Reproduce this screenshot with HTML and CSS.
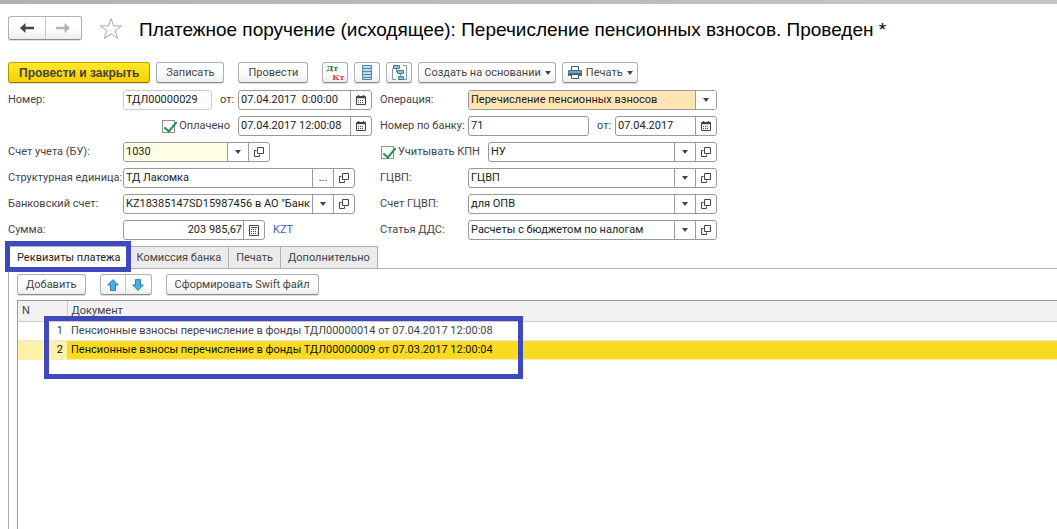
FILE: index.html
```html
<!DOCTYPE html>
<html lang="ru">
<head>
<meta charset="utf-8">
<title>Платежное поручение (исходящее)</title>
<link rel="stylesheet" href="styles.css">
</head>
<body>
<svg class="defs" aria-hidden="true">
  <symbol id="caret" viewBox="0 0 6 4"><path d="M0 0h6L3 4z" fill="#444"/></symbol>
  <symbol id="open" viewBox="0 0 10 10"><path d="M3.5.5h6v6h-6zM2.500 3.500h-2v6h5v-2" fill="none" stroke="#444"/></symbol>
  <symbol id="calendar" viewBox="0 0 10 10"><path d="M.5 1.500h9v8h-9z" fill="#fff" stroke="#444"/><path d="M1 2.500h8M2.500 0v2M7.500 0v2" stroke="#444" stroke-width="1.500"/><path d="M2 5.500h6M2 7.500h6" stroke="#444" stroke-dasharray="1 1"/></symbol>
  <symbol id="calc" viewBox="0 0 10 11"><path d="M.5.5h9v10h-9z" fill="#fff" stroke="#444"/><path d="M2 2.500h6" stroke="#444"/><path d="M2 4.500h6M2 6.500h6M2 8.500h6" stroke="#444" stroke-dasharray="1 1"/></symbol>
</svg>
<div class="titlebar-edge"></div>
<header class="head">
  <div class="pair nav">
    <button aria-label="Назад"><svg width="14" height="10" viewBox="0 0 14 10"><path d="M0 5l5.500-5v3.700H14v2.600H5.500V10z" fill="#444"/></svg></button>
    <button aria-label="Вперед"><svg width="14" height="10" viewBox="0 0 14 10"><path d="M14 5L8.500 0v3.700H0v2.600h8.500V10z" fill="#b4b4b4"/></svg></button>
  </div>
  <button class="star" aria-label="Избранное"><svg width="24" height="23" viewBox="0 0 24 23"><path d="M12 1.500l2.600 7.400h8l-6.400 4.800 2.400 7.800L12 16.900l-6.600 4.600 2.400-7.800-6.400-4.800h8z" fill="#fff" stroke="#aaa"/></svg></button>
  <h1>Платежное поручение (исходящее): Перечисление пенсионных взносов. Проведен *</h1>
</header>
<div class="toolbar main-tools">
  <button class="btn primary">Провести и закрыть</button>
  <button class="btn">Записать</button>
  <button class="btn spaced">Провести</button>
  <button class="btn icon spaced" aria-label="Дт Кт"><span class="dtkt"><b class="dt">Дт</b><b class="kt">Кт</b></span></button>
  <button class="btn icon" aria-label="Список"><svg width="10" height="15" viewBox="0 0 10 15"><path d="M.5.5h9v14h-9z" fill="#b9dbee" stroke="#5b86a0"/><path d="M1 3.500h8M1 6.500h8M1 9.500h8M1 12.500h8" stroke="#5b86a0"/></svg></button>
  <button class="btn icon" aria-label="Структура"><svg width="15" height="15" viewBox="0 0 15 15"><path d="M3 3.500H.5v11H4M11 .5h3.500v14H12M4.500 4v3h1M8.500 9v3" fill="none" stroke="#8199a8"/><path d="M1.500.5h6v3h-6zM5.500 5.500h6v3h-6zM6.500 11.500h5v3h-5z" fill="#8cc0de" stroke="#4c7893"/></svg></button>
  <button class="btn menu">Создать на основании <svg width="6" height="4"><use href="#caret"/></svg></button>
  <button class="btn menu print"><svg width="14" height="13" viewBox="0 0 14 13"><path d="M3.500.5h7v4h-7z" fill="#fff" stroke="#3c5a70"/><path d="M1 4h12a1 1 0 0 1 1 1v5H0V5a1 1 0 0 1 1-1z" fill="#3f6e90"/><path d="M1 6h12" stroke="#b5d3e5"/><path d="M3.500 8.500h7v4h-7z" fill="#fff" stroke="#3c5a70"/></svg>Печать <svg width="6" height="4"><use href="#caret"/></svg></button>
</div>

<form class="form">
  <div class="col left">
    <div class="row">
      <label class="cap" for="num">Номер:</label>
      <div class="field pale w-num"><input id="num" value="ТДЛ00000029"></div>
      <label class="from" for="d1">от:</label>
      <div class="field w-date"><input id="d1" value="07.04.2017  0:00:00"><button type="button" class="cell" aria-label="Календарь"><svg width="10" height="10"><use href="#calendar"/></svg></button></div>
    </div>
    <div class="row end">
      <label class="check"><input type="checkbox" checked>Оплачено</label>
      <div class="field w-date"><input aria-label="Дата оплаты" value="07.04.2017 12:00:08"><button type="button" class="cell" aria-label="Календарь"><svg width="10" height="10"><use href="#calendar"/></svg></button></div>
    </div>
    <div class="row">
      <label class="cap" for="acc">Счет учета (БУ):</label>
      <div class="field w-acc"><div class="combo cream"><select id="acc"><option>1030</option></select><span class="cell"><svg width="6" height="4"><use href="#caret"/></svg></span></div><button type="button" class="cell" aria-label="Открыть"><svg width="10" height="10"><use href="#open"/></svg></button></div>
    </div>
    <div class="row">
      <label class="cap" for="unit">Структурная единица:</label>
      <div class="field w-wide"><input id="unit" value="ТД Лакомка"><button type="button" class="cell">...</button><button type="button" class="cell" aria-label="Открыть"><svg width="10" height="10"><use href="#open"/></svg></button></div>
    </div>
    <div class="row">
      <label class="cap" for="bank">Банковский счет:</label>
      <div class="field w-wide"><div class="combo"><select id="bank"><option>KZ18385147SD15987456 в АО "Банк</option></select><span class="cell"><svg width="6" height="4"><use href="#caret"/></svg></span></div><button type="button" class="cell" aria-label="Открыть"><svg width="10" height="10"><use href="#open"/></svg></button></div>
    </div>
    <div class="row">
      <label class="cap" for="sum">Сумма:</label>
      <div class="field w-sum"><input id="sum" class="num" value="203 985,67"><button type="button" class="cell" aria-label="Калькулятор"><svg width="10" height="11"><use href="#calc"/></svg></button></div>
      <a class="currency" href="#kzt">KZT</a>
    </div>
  </div>
  <div class="col right">
    <div class="row">
      <label class="cap" for="op">Операция:</label>
      <div class="field grow"><div class="combo amber"><select id="op"><option>Перечисление пенсионных взносов</option></select><span class="cell"><svg width="6" height="4"><use href="#caret"/></svg></span></div></div>
    </div>
    <div class="row">
      <label class="cap" for="bn">Номер по банку:</label>
      <div class="field grow"><input id="bn" value="71"></div>
      <label class="from" for="d3">от:</label>
      <div class="field w-day"><input id="d3" value="07.04.2017"><button type="button" class="cell" aria-label="Календарь"><svg width="10" height="10"><use href="#calendar"/></svg></button></div>
    </div>
    <div class="row">
      <label class="check wide"><input type="checkbox" checked>Учитывать КПН</label>
      <div class="field grow"><div class="combo"><select aria-label="Вид учета"><option>НУ</option></select><span class="cell"><svg width="6" height="4"><use href="#caret"/></svg></span></div><button type="button" class="cell" aria-label="Открыть"><svg width="10" height="10"><use href="#open"/></svg></button></div>
    </div>
    <div class="row">
      <label class="cap" for="g">ГЦВП:</label>
      <div class="field grow"><div class="combo"><select id="g"><option>ГЦВП</option></select><span class="cell"><svg width="6" height="4"><use href="#caret"/></svg></span></div><button type="button" class="cell" aria-label="Открыть"><svg width="10" height="10"><use href="#open"/></svg></button></div>
    </div>
    <div class="row">
      <label class="cap" for="ga">Счет ГЦВП:</label>
      <div class="field grow"><div class="combo"><select id="ga"><option>для ОПВ</option></select><span class="cell"><svg width="6" height="4"><use href="#caret"/></svg></span></div><button type="button" class="cell" aria-label="Открыть"><svg width="10" height="10"><use href="#open"/></svg></button></div>
    </div>
    <div class="row">
      <label class="cap" for="dds">Статья ДДС:</label>
      <div class="field grow"><div class="combo"><select id="dds"><option>Расчеты с бюджетом по налогам</option></select><span class="cell"><svg width="6" height="4"><use href="#caret"/></svg></span></div><button type="button" class="cell" aria-label="Открыть"><svg width="10" height="10"><use href="#open"/></svg></button></div>
    </div>
  </div>
</form>

<div class="tabs" role="tablist">
  <button class="tab active" role="tab" aria-selected="true">Реквизиты платежа</button>
  <button class="tab" role="tab">Комиссия банка</button>
  <button class="tab" role="tab">Печать</button>
  <button class="tab" role="tab">Дополнительно</button>
</div>
<main class="panel">
  <div class="toolbar">
    <button class="btn">Добавить</button>
    <div class="pair moves">
      <button aria-label="Вверх"><svg width="12" height="12" viewBox="0 0 12 12"><path d="M6 .6L11.300 6H8.500v5.400h-5V6H.7z" fill="#45b0e0" stroke="#2a7fae"/></svg></button>
      <button aria-label="Вниз"><svg width="12" height="12" viewBox="0 0 12 12"><path d="M6 11.400L11.300 6H8.500V.6h-5V6H.7z" fill="#45b0e0" stroke="#2a7fae"/></svg></button>
    </div>
    <button class="btn">Сформировать Swift файл</button>
  </div>
  <div class="grid">
    <table>
      <thead><tr><th class="n">N</th><th>Документ</th></tr></thead>
      <tbody>
        <tr><td class="n">1</td><td>Пенсионные взносы перечисление в фонды ТДЛ00000014 от 07.04.2017 12:00:08</td></tr>
        <tr class="selected"><td class="n">2</td><td>Пенсионные взносы перечисление в фонды ТДЛ00000009 от 07.03.2017 12:00:04</td></tr>
      </tbody>
    </table>
    <div class="marker"></div>
  </div>
</main>
</body>
</html>
```
FILE: styles.css
```css
* { box-sizing: border-box; }
body {
  margin: 0;
  min-height: 100vh;
  display: flex;
  flex-direction: column;
  background: #fff;
  color: #444;
  font: 11px/16px Roboto, "Liberation Sans", sans-serif;
  overflow: hidden;
}
button, input, select { font: inherit; color: inherit; margin: 0; }
button { padding: 0; border: 0; background: none; }
svg { display: block; flex: none; }
.defs { position: absolute; width: 0; height: 0; }
.titlebar-edge { height: 4px; background: linear-gradient(90deg, #b2b2b4, #c6c6c8); }

.head { display: flex; align-items: center; height: 48px; padding: 0 8px; }
.pair {
  display: flex;
  border: 1px solid #b0b0b0;
  border-bottom-color: #8c8c8c;
  border-radius: 3px;
  background: linear-gradient(#fff 50%, #ededed);
  box-shadow: 0 1px 0 #ddd;
}
.pair button { flex: 1; display: flex; align-items: center; justify-content: center; }
.pair button + button { border-left: 1px solid #c8c8c8; }
.nav { width: 74px; height: 24px; }
.star { margin: 0 16px 0 17px; }
h1 { margin: 0; padding-top: 3px; font: 19px/24px "Liberation Sans", Arial, sans-serif; color: #000; white-space: nowrap; }

.toolbar { display: flex; gap: 6px; }
.main-tools { padding: 10px 8px 7px; }
.btn {
  height: 21px;
  padding: 0 8px;
  border: 1px solid #b0b0b0;
  border-bottom-color: #8c8c8c;
  border-radius: 3px;
  background: linear-gradient(#fff 50%, #ededed);
  box-shadow: 0 1px 0 #ddd;
  white-space: nowrap;
}
.main-tools .btn { padding: 0 9px; }
.btn.spaced { margin-left: 8px; }
.main-tools .primary {
  padding: 0 10px;
  border-color: #c3a200 #b59600 #8f7800;
  background: linear-gradient(#ffe92c, #f5d000);
  font: bold 12px/16px "Liberation Sans", Arial, sans-serif;
}
.main-tools .icon { display: flex; align-items: center; justify-content: center; width: 26px; padding: 0; }
.main-tools .menu { display: flex; align-items: center; gap: 4px; padding: 0 4px 0 5px; }
.dtkt { display: grid; font: bold 8px/9px "DejaVu Serif", serif; }
.dt { color: #1d7a12; padding-right: 6px; }
.kt { color: #d9453c; padding-left: 6px; }

.form { display: flex; gap: 8px; padding: 0 8px; }
.col { display: flex; flex-direction: column; gap: 6px; }
.left { width: 364px; }
.right { width: 337px; }
.row { display: flex; align-items: center; height: 20px; }
.end { justify-content: flex-end; }
.cap { flex: none; white-space: nowrap; }
.left .cap { width: 115px; }
.right .cap { width: 88px; }
.from { width: 26px; padding-left: 8px; }
.check { display: flex; align-items: center; gap: 4px; padding-right: 8px; white-space: nowrap; }
.check.wide { width: 108px; padding: 0 0 0 1px; }
.check input {
  appearance: none;
  flex: none;
  width: 13px;
  height: 13px;
  border: 1px solid #8f8f8f;
  background: #fff;
  position: relative;
}
.check input:checked::after {
  content: "";
  position: absolute;
  left: 4px;
  top: -2px;
  width: 5px;
  height: 11px;
  border: solid #1b9150;
  border-width: 0 2px 2px 0;
  transform: rotate(40deg);
}
.field {
  display: flex;
  height: 20px;
  border: 1px solid #999;
  border-radius: 3px;
  background: #fff;
  color: #222;
  overflow: hidden;
}
.field.pale { border-color: #ccc; }
.field input { flex: 1; min-width: 0; width: 0; border: 0; padding: 0 2px; background: none; white-space: pre; }
.field .num { text-align: right; padding-right: 1px; }
.cell { display: flex; align-items: center; justify-content: center; width: 21px; flex: none; border-left: 1px solid #999; }
.combo { flex: 1; min-width: 0; display: grid; grid-template-columns: minmax(0, 1fr) 21px; }
.combo select { grid-area: 1 / 1 / 2 / 3; appearance: none; border: 0; border-radius: 0; padding: 0 21px 0 2px; background: none; min-width: 0; }
.combo .cell { grid-area: 1 / 2; background: #fff; pointer-events: none; }
.cream select { background: #fffee5; }
.amber select { background: #ffe5b3; }
.grow { flex: 1; }
.w-num { width: 89px; }
.w-date { width: 134px; }
.w-acc { width: 147px; }
.w-wide { width: 232px; }
.w-sum { width: 142px; }
.w-day { width: 102px; }
.currency { margin-left: 8px; color: #3f62b5; text-decoration: none; }

.tabs { display: flex; padding: 6px 8px 0; }
.tab {
  height: 22px;
  padding: 0 7px;
  border: 1px solid #b0b0b0;
  border-width: 1px 1px 0 0;
  background: #ebebeb;
  white-space: nowrap;
}
.tab.active { position: relative; padding: 0 8px; background: #fff; border-left-width: 1px; color: #222; }
.tab.active::after {
  content: "";
  position: absolute;
  inset: -6px -2px -4px -4px;
  border: 5px solid #3f48bc;
  z-index: 1;
}
.panel {
  flex: 1;
  display: flex;
  flex-direction: column;
  margin-left: 8px;
  padding: 5px 0 0 8px;
  border: 1px solid #b0b0b0;
  border-width: 1px 0 0 1px;
}
.moves { width: 52px; height: 21px; margin: 0 8px; }
.grid { position: relative; flex: 1; margin-top: 5px; border: 1px solid #999; border-width: 1px 0 0 1px; }
table { width: 100%; border-collapse: collapse; table-layout: fixed; }
th, td { padding: 0 4px; text-align: left; font-weight: normal; white-space: nowrap; }
th { height: 20px; background: #f2f2f2; border-bottom: 1px solid #ccc; border-left: 1px solid #ccc; }
.n { width: 49px; }
th.n { border-left: 0; }
td { height: 19px; border-bottom: 1px solid #e6e6e6; }
td.n { text-align: right; }
.selected td { background: #fbdb20; color: #111; border-bottom-color: #fbeea8; }
.selected td.n { background: #fdf2a8; }
.marker { position: absolute; left: 26px; top: 15px; width: 479px; height: 63px; border: 5px solid #3f48bc; }
```
